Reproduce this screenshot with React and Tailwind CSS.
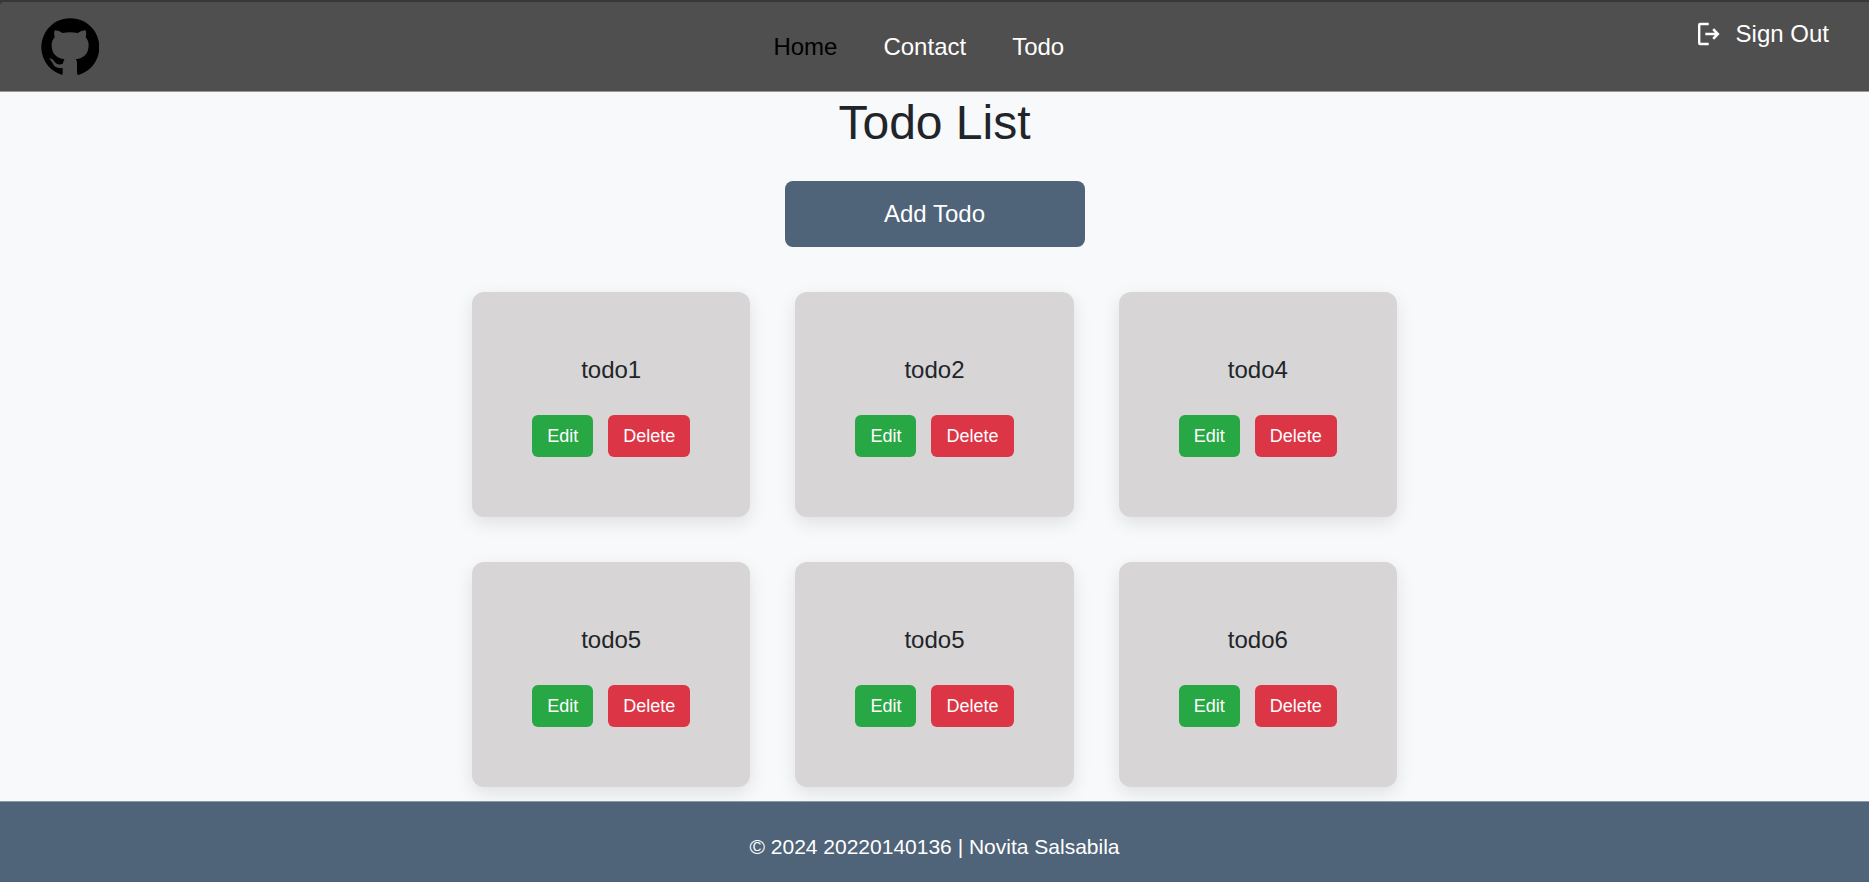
import React from "react";

const todos = ["todo1", "todo2", "todo4", "todo5", "todo5", "todo6"];

function GithubLogo() {
  return (
    <svg viewBox="15 17 174 174" className="size-[58px]" fill="#000" aria-hidden="true">
      <path d="M79 188A87 87 0 1 1 127 188Q123 187 123 182V155C123 149 123 145 119 141C146 137 158 122 158 98C158 88 154 81 149 75C151 68 151 61 149 54C141 54 133 57 126 62C110 59 94 59 79 62C72 57 64 54 56 54C54 61 54 68 56 75C51 81 47 88 47 98C47 122 59 137 86 141C83 144 82 149 80 155C69 158 61 156 56 149C51 141 46 138 39 139C44 142 47 147 50 153C55 165 66 169 80 167V182Q80 187 79 188Z" />
    </svg>
  );
}

function SignOutIcon() {
  return (
    <svg viewBox="0 0 24 24" className="size-6" fill="none" stroke="currentColor" strokeWidth="2.4" aria-hidden="true">
      <path d="M11.7 2H3.2Q2.2 2 2.2 3V21Q2.2 22 3.2 22H11.7" />
      <path d="M8.3 12H20.5M16.2 7.2L20.8 12L16.2 16.8" strokeWidth="2.6" />
    </svg>
  );
}

function TodoCard({ title }) {
  return (
    <li className="flex flex-col items-center gap-[27px] rounded-xl bg-[#d7d5d6] py-[60px] shadow-[0_6px_18px_rgba(0,0,0,0.1)]">
      <p>{title}</p>
      <div className="flex gap-[15px] text-lg leading-[30px] text-white">
        <button type="button" className="rounded-md bg-[#28a745] px-[15px] py-1.5">Edit</button>
        <button type="button" className="rounded-md bg-[#dc3545] px-[15px] py-1.5">Delete</button>
      </div>
    </li>
  );
}

export default function App() {
  return (
    <div className="flex min-h-screen flex-col bg-[#f8f9fb] font-['Liberation_Sans',Arial,sans-serif] text-2xl leading-9 text-[#212529]">
      <div className="bg-[#383838] pt-0.5">
        <header className="flex items-center justify-between rounded-tl border-b border-[#979797] bg-[#4f4f4f] pt-4 pr-10 pb-[15px] pl-[41px]">
          <a href="#home" aria-label="GitHub" className="mr-[42px]">
            <GithubLogo />
          </a>
          <nav className="flex gap-[46px] text-white">
            <a href="#home" className="text-black">Home</a>
            <a href="#contact">Contact</a>
            <a href="#todo">Todo</a>
          </nav>
          <button type="button" className="flex items-center gap-[15px] self-start leading-8 text-white">
            <SignOutIcon />
            Sign Out
          </button>
        </header>
      </div>

      <main className="flex flex-1 flex-col items-center pb-[14px]">
        <h1 className="mb-[27px] text-5xl leading-[62px]">Todo List</h1>
        <button type="button" className="mb-[45px] w-[300px] rounded-lg bg-[#4f6379] py-[15px] text-white">
          Add Todo
        </button>
        <ul className="grid w-full max-w-[925px] grid-cols-3 gap-[45px]">
          {todos.map((title, i) => (
            <TodoCard key={i} title={title} />
          ))}
        </ul>
      </main>

      <footer className="border-t border-[#8e98a3] bg-[#4f6379] pt-[30px] pb-5 text-center text-[21px] leading-[30px] text-white">
        © 2024 20220140136 | Novita Salsabila
      </footer>
    </div>
  );
}
